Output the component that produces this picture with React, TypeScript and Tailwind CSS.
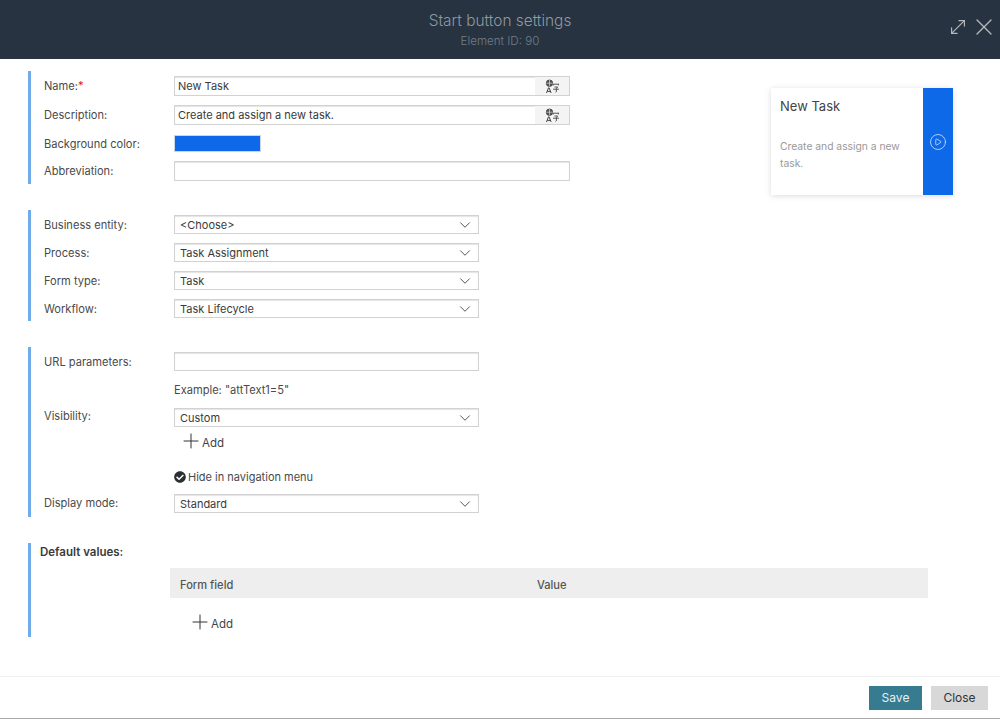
import type { ReactNode } from 'react';
import { ChevronDown, CirclePlay, MoveDiagonal, Plus, X } from 'lucide-react';
import { FaCheckCircle } from 'react-icons/fa';

const inputBox = 'border border-[#d2d2d2] bg-white shadow-[inset_0_1px_1px_#e4e4e4]';

function TranslateIcon() {
  return (
    <svg width="15" height="15" viewBox="0 0 15 15" fill="none" stroke="#444" strokeWidth="0.9">
      <circle cx="4.5" cy="4.2" r="3.2" fill="#555" />
      <path d="M1.3 4.2h6.4M4.5 1v6.4" stroke="#eee" strokeWidth="0.6" />
      <path d="M1.5 14l2-5.2h.6l2 5.2M2.3 12.4h3" strokeWidth="1" />
      <path d="M8.5 5.2h5.5M13.5 5.2v1.2M8.5 5.2v1.2M9.5 8h3.2l-1.3 1.3v3.4l-.9.5M8 10.2h6" strokeWidth="0.9" />
    </svg>
  );
}

function Row({ label, children, className }: { label: ReactNode; children?: ReactNode; className?: string }) {
  return (
    <div className={`flex ${className ?? ''}`}>
      <div className="w-[130px] shrink-0 leading-[16px]">{label}</div>
      {children}
    </div>
  );
}

function TextInput({ value, translate, wide }: { value?: string; translate?: boolean; wide?: boolean }) {
  return (
    <div className={`flex h-[20px] items-center ${wide ? 'w-[396px]' : 'w-[305px]'} ${inputBox}`}>
      <span className="flex-1 pl-[3px] pt-px text-[11px] text-[#3a3a3a]">{value}</span>
      {translate && (
        <span className="flex h-full w-[34px] items-center justify-center bg-[#f4f4f4]">
          <TranslateIcon />
        </span>
      )}
    </div>
  );
}

function SelectBox({ value }: { value: string }) {
  return (
    <div className={`flex h-[19px] w-[305px] items-center justify-between pl-[5px] pr-[4px] ${inputBox}`}>
      <span className="pt-px text-[11px] text-[#3a3a3a]">{value}</span>
      <ChevronDown size={18} strokeWidth={1.2} color="#444" className="-my-[2px]" />
    </div>
  );
}

function AddLink({ className }: { className?: string }) {
  return (
    <div className={`flex h-[16px] items-center text-[#444] ${className ?? ''}`}>
      <Plus size={24} strokeWidth={1} color="#333" className="-my-[4px] -mr-[1px]" />
      <span className="pt-[3px] text-[11.5px] leading-[16px]">Add</span>
    </div>
  );
}

function Section({ children, className }: { children: ReactNode; className?: string }) {
  return <section className={`ml-[28px] border-l-[3px] border-[#72abea] pl-[13px] ${className ?? ''}`}>{children}</section>;
}

export default function App() {
  return (
    <div className="flex h-[719px] w-[1000px] flex-col overflow-hidden bg-white text-[11.1px] text-[#4a4a4a] font-['Inter',sans-serif]">
      <header className="relative flex h-[59px] shrink-0 flex-col items-center bg-[#273340]">
        <div className="mt-[10px] text-[15.4px] font-light leading-[22px] text-[#9098a0]">Start button settings</div>
        <div className="mt-[2px] text-[11.6px] font-light leading-[14px] text-[#747d86]">Element ID: 90</div>
        <div className="absolute right-[2px] top-[13px] flex items-center text-[#b4b8bd]">
          <MoveDiagonal size={22} strokeWidth={1.3} className="mr-[1px]" />
          <X size={28} strokeWidth={1.2} />
        </div>
      </header>

      <main className="flex-1 pt-[12px]">
        <div className="flex">
          <div className="w-[771px] shrink-0">
            <Section className="flex h-[113px] flex-col pt-[5px]">
              <Row label={<>Name:<span className="text-[#e02020]">*</span></>} className="h-[20px] items-center">
                <TextInput value="New Task" translate wide />
              </Row>
              <Row label="Description:" className="mt-[9px] h-[20px] items-center">
                <TextInput value="Create and assign a new task." translate wide />
              </Row>
              <Row label="Background color:" className="mt-[10px] h-[17px] items-center">
                <div className="h-[17px] w-[87px] border border-[#c8d6e8] bg-[#0d69e8]" />
              </Row>
              <Row label="Abbreviation:" className="mt-[9px] h-[19px] items-center">
                <TextInput wide />
              </Row>
            </Section>

            <Section className="mt-[26px] flex h-[111px] flex-col gap-[9px] pt-[5px]">
              <Row label="Business entity:" className="items-center"><SelectBox value="<Choose>" /></Row>
              <Row label="Process:" className="items-center"><SelectBox value="Task Assignment" /></Row>
              <Row label="Form type:" className="items-center"><SelectBox value="Task" /></Row>
              <Row label="Workflow:" className="items-center"><SelectBox value="Task Lifecycle" /></Row>
            </Section>

            <Section className="mt-[26px] flex h-[170px] flex-col pt-[5px]">
              <Row label="URL parameters:" className="items-center">
                <div className={`h-[19px] w-[305px] ${inputBox}`} />
              </Row>
              <div className="ml-[130px] mt-[10px] h-[16px] pt-px leading-[16px]">Example: "attText1=5"</div>
              <Row label="Visibility:" className="mt-[11px] items-start">
                <div>
                  <SelectBox value="Custom" />
                  <AddLink className="ml-[5px] mt-[6px]" />
                </div>
              </Row>
              <div className="ml-[130px] mt-[20px] flex h-[16px] items-center gap-[2px]">
                <FaCheckCircle size={12} color="#2b2f33" />
                <span className="pt-px text-[11px]">Hide in navigation menu</span>
              </div>
              <Row label={<span className="block pt-px">Display mode:</span>} className="mt-[9px] items-start"><SelectBox value="Standard" /></Row>
            </Section>
          </div>

          <aside className="mt-[17px] flex h-[107px] w-[182px] self-start bg-white shadow-[0_1px_6px_rgba(0,0,0,0.14)]">
            <div className="flex-1 pl-[9px]">
              <div className="mt-[8px] text-[13px] leading-[20px] text-[#444]">New Task</div>
              <div className="mt-[22px] text-[10.3px] leading-[17px] text-[#999]">Create and assign a new task.</div>
            </div>
            <div className="flex w-[30px] items-center justify-center bg-[#0d69e8] pt-[1px]">
              <CirclePlay size={18} strokeWidth={1} color="#dfeafb" />
            </div>
          </aside>
        </div>

        <Section className="mt-[26px] h-[94px]">
          <div className="-ml-[4px] pt-[1px] text-[11.5px] font-semibold leading-[16px] text-[#3a3a3a]">Default values:</div>
          <div className="ml-[126px] mt-[8px] flex h-[30px] w-[758px] items-center bg-[#eeeeee] pt-[5px] font-medium text-[#555]">
            <span className="ml-[10px] w-[357px]">Form field</span>
            <span>Value</span>
          </div>
          <AddLink className="ml-[144px] mt-[16px]" />
        </Section>
      </main>

      <footer className="flex h-[43px] shrink-0 items-center justify-end gap-[9px] border-t border-[#f0f0f0] border-b-[1.5px] border-b-[#aaaaaa] pr-[12px]">
        <button className="h-[24px] w-[53px] bg-[#377b91] text-[12px] text-[#e6f0f3]">Save</button>
        <button className="h-[24px] w-[57px] bg-[#d8d8d8] text-[12px] text-[#333]">Close</button>
      </footer>
    </div>
  );
}
